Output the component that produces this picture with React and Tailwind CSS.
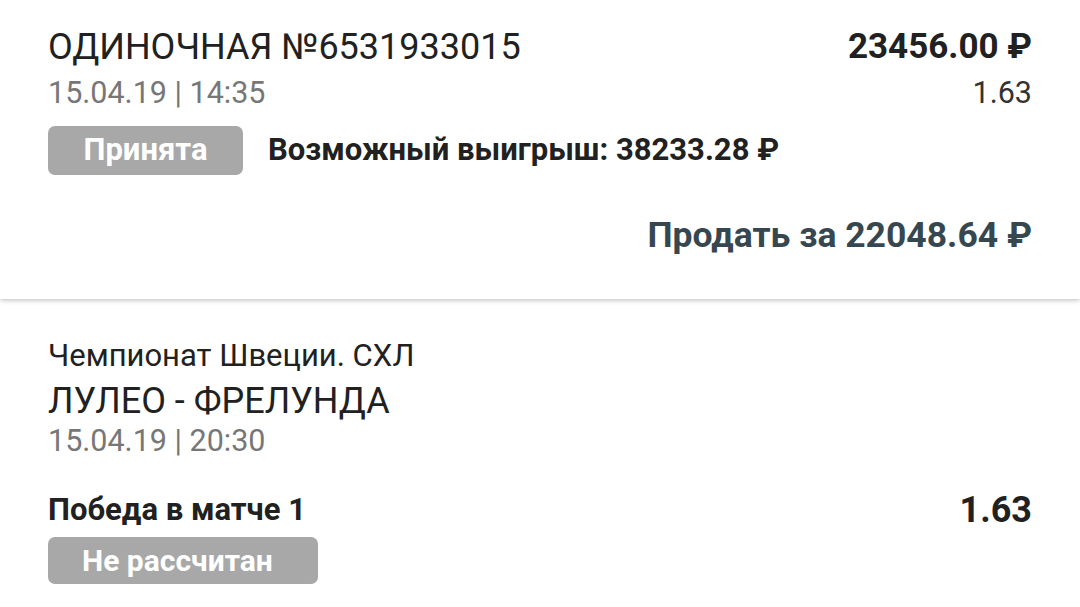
export default function App() {
  return (
    <div className="min-h-screen bg-white font-['Roboto','Noto_Sans',sans-serif] text-[#212121]">
      {/* bet header */}
      <div className="relative z-10 bg-white px-12 pt-[25px] pb-[44px] shadow-[0_1px_5px_rgba(0,0,0,0.28)]">
        <div className="flex justify-between">
          <div>
            <div className="text-[36px] leading-[44px]">ОДИНОЧНАЯ №6531933015</div>
            <div className="mt-[6px] text-[30.5px] leading-[36px] text-[#777777]">15.04.19 | 14:35</div>
          </div>
          <div className="text-right">
            <div className="text-[35px] leading-[44px] font-bold">23456.00 ₽</div>
            <div className="mt-[6px] text-[30.5px] leading-[36px] text-[#333333]">1.63</div>
          </div>
        </div>

        <div className="mt-[15px] flex items-center gap-[25px]">
          <span className="flex h-[49px] w-[195px] items-center justify-center rounded-[7px] bg-[#a8a8a8] text-[31px] font-bold text-white">
            Принята
          </span>
          <span className="text-[31px] font-bold">Возможный выигрыш: 38233.28 ₽</span>
        </div>

        <div className="mt-[40px] text-right text-[35.5px] leading-[40px] font-bold text-[#37474f]">
          Продать за 22048.64 ₽
        </div>
      </div>

      {/* event */}
      <div className="px-12 pt-[34px]">
        <div className="text-[31px] leading-[46px]">Чемпионат Швеции. СХЛ</div>
        <div className="text-[36px] leading-[44px]">ЛУЛЕО - ФРЕЛУНДА</div>
        <div className="text-[30.5px] leading-[36px] text-[#777777]">15.04.19 | 20:30</div>

        <div className="mt-[24px] flex items-center justify-between">
          <span className="text-[31px] font-bold">Победа в матче 1</span>
          <span className="text-[36px] font-bold">1.63</span>
        </div>
        <span className="flex h-[47px] w-[270px] items-center rounded-[7px] bg-[#a8a8a8] pl-[34px] text-[30px] font-bold text-white">
          Не рассчитан
        </span>
      </div>
    </div>
  );
}
